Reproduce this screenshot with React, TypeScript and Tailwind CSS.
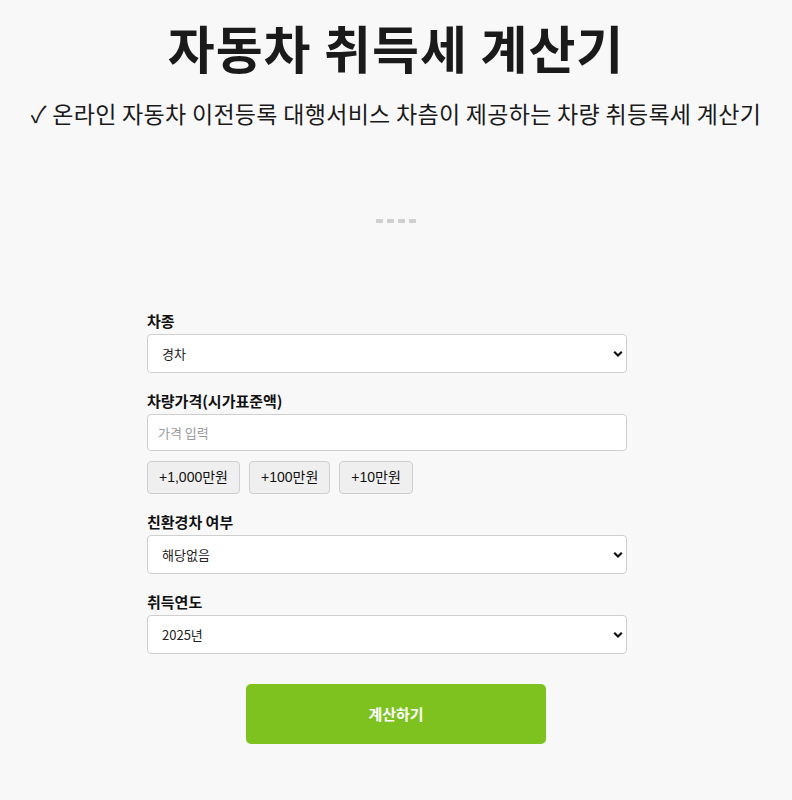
const font = { fontFamily: '"Noto Sans CJK KR", "Noto Sans", sans-serif' };

function Chevron() {
  return (
    <svg
      className="pointer-events-none absolute right-[4px] top-1/2 -translate-y-1/2"
      width="10"
      height="7"
      viewBox="0 0 10 7"
    >
      <path d="M1.2 1.3 L5 5 L8.8 1.3" fill="none" stroke="#111" strokeWidth="2.2" />
    </svg>
  );
}

function Field({ label, value, options }: { label: string; value: string; options: string[] }) {
  return (
    <div>
      <div className="h-5 text-[15px] leading-5 font-bold text-[#111] mb-[3px]">{label}</div>
      <div className="relative">
        <select
          defaultValue={value}
          className="w-full h-[39px] appearance-none bg-white border border-[#cfcfcf] rounded-[4px] pl-[14px] pr-6 text-[13px] text-[#222] outline-none"
          style={font}
        >
          {options.map((o) => (
            <option key={o}>{o}</option>
          ))}
        </select>
        <Chevron />
      </div>
    </div>
  );
}

export default function App() {
  const quick = ['+1,000만원', '+100만원', '+10만원'];

  return (
    <div className="min-h-[800px] bg-[#f8f8f9] text-[#111]" style={font}>
      <h1 className="pt-[17px] text-center text-[51px] leading-[60px] font-bold tracking-[1px] text-[#1a1a1a]">
        자동차 취득세 계산기
      </h1>
      <p className="mt-[21px] text-center text-[23px] leading-[30px] tracking-[0.3px] text-[#1a1a1a]">
        ✓ 온라인 자동차 이전등록 대행서비스 차츰이 제공하는 차량 취등록세 계산기
      </p>

      {/* ad placeholder */}
      <div className="mt-[91px] flex justify-center gap-[4px]">
        {[0, 1, 2, 3].map((i) => (
          <span key={i} className="block w-[7px] h-[4px] bg-[#d0d0d0]" />
        ))}
      </div>

      <div className="mx-auto mt-[88px] w-[498px] flex flex-col">
        <div className="pr-[18px]">
          <Field label="차종" value="경차" options={['경차', '승용차', '승합차', '화물차']} />

          <div className="mt-[18px]">
            <div className="h-5 text-[15px] leading-5 font-bold mb-[3px]">차량가격(시가표준액)</div>
            <input
              placeholder="가격 입력"
              className="w-full h-[37px] bg-white border border-[#cfcfcf] rounded-[4px] px-[10px] text-[13px] placeholder:text-[#9a9a9a] outline-none"
              style={font}
            />
            <div className="mt-[10px] flex gap-[9px]">
              {quick.map((q) => (
                <button
                  key={q}
                  className="h-[33px] px-[11px] bg-[#efefef] border border-[#cfcfcf] rounded-[4px] text-[14px] text-[#111]"
                  style={{ fontFamily: '"Liberation Sans", "Noto Sans CJK KR", sans-serif' }}
                >
                  {q}
                </button>
              ))}
            </div>
          </div>

          <div className="mt-[18px]">
            <Field label="친환경차 여부" value="해당없음" options={['해당없음', '하이브리드', '전기차', '수소차']} />
          </div>

          <div className="mt-[18px]">
            <Field label="취득연도" value="2025년" options={['2025년', '2024년', '2023년']} />
          </div>
        </div>

        <button className="mt-[30px] self-center w-[300px] h-[60px] rounded-[5px] bg-[#7dc21e] text-white text-[15px] font-bold">
          계산하기
        </button>
      </div>
    </div>
  );
}
